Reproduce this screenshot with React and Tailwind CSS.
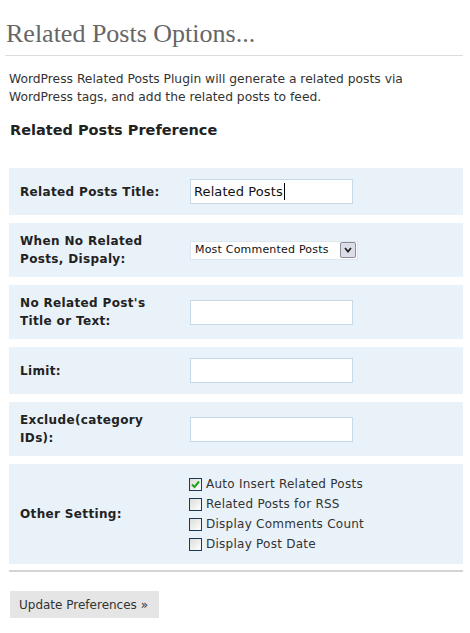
import React from 'react';

const rows = [
    { label: 'Related Posts Title:', value: 'Related Posts', h: 'h-[47px]' },
    { label: 'When No Related Posts, Dispaly:', select: true, h: 'h-[54px]' },
    { label: "No Related Post's Title or Text:", value: '', h: 'h-[54px]' },
    { label: 'Limit:', value: '', h: 'h-[47px]' },
    { label: 'Exclude(category IDs):', value: '', h: 'h-[54px]' },
];

const options = [
    { label: 'Auto Insert Related Posts', checked: true },
    { label: 'Related Posts for RSS' },
    { label: 'Display Comments Count' },
    { label: 'Display Post Date' },
];

function Checkbox({ checked }) {
    return (
        <span className="w-[13px] h-[13px] border border-[#1c3a57] bg-gradient-to-br from-[#dcdcd7] to-white flex items-center justify-center shrink-0">
            {checked && (
                <svg width="9" height="9" viewBox="0 0 9 9">
                    <path d="M1 4.5 L3.5 7 L8 1.5" stroke="#21a121" strokeWidth="2" fill="none" />
                </svg>
            )}
        </span>
    );
}

export default function App() {
    return (
        <div className="bg-white w-[470px] h-[633px] pl-[5px] pr-[7px] font-['DejaVu_Sans',sans-serif]">
            <h2 className="pt-[20px] pl-[1px] pb-[7px] text-[26px] leading-[28px] text-[#666] font-['Liberation_Serif',serif] font-normal border-b border-[#dcdcdc]">
                Related Posts Options...
            </h2>
            <p className="mt-[14px] ml-[4px] text-[12.3px] leading-[18px] text-[#333]">
                WordPress Related Posts Plugin will generate a related posts via
                WordPress tags, and add the related posts to feed.
            </p>
            <h3 className="mt-[15px] ml-[5px] text-[14.5px] leading-[18px] font-bold text-[#222]">
                Related Posts Preference
            </h3>

            <div className="mt-[29px] ml-[4px] flex flex-col gap-[8px]">
                {rows.map((r) => (
                    <div key={r.label} className={`${r.h} bg-[#e9f1f9] flex items-center`}>
                        <div className="w-[181px] pl-[11px] pr-[10px] text-[12px] leading-[18px] font-bold text-[#222] tracking-[0.35px]">
                            {r.label}
                        </div>
                        {r.select ? (
                            <div className="w-[168px] h-[19px] bg-white border border-[#dde6ee] flex items-center justify-between pl-[4px] pr-[1px]">
                                <span className="text-[11px] text-[#111] tracking-[0.2px]">Most Commented Posts</span>
                                <span className="w-[16px] h-[16px] border border-[#8a8a9a] rounded-[2px] bg-[#dcdde6] flex items-center justify-center">
                                    <svg width="8" height="6" viewBox="0 0 8 6">
                                        <path d="M1 1 L4 4.5 L7 1" stroke="#222" strokeWidth="1.8" fill="none" />
                                    </svg>
                                </span>
                            </div>
                        ) : (
                            <div className="w-[163px] h-[25px] bg-white border border-[#c6d9e9] flex items-center px-[3px] text-[13px] text-[#111] tracking-[0.1px]">
                                {r.value}
                                {r.value && <span className="w-px h-[17px] bg-black ml-[1px]" />}
                            </div>
                        )}
                    </div>
                ))}

                <div className="h-[100px] bg-[#e9f1f9] flex items-center">
                    <div className="w-[180px] pl-[11px] text-[12px] font-bold text-[#222] tracking-[0.35px]">
                        Other Setting:
                    </div>
                    <div className="flex flex-col gap-[3px]">
                        {options.map((o) => (
                            <label key={o.label} className="flex items-center gap-[4px] text-[12px] leading-[17px] text-[#333] tracking-[0.25px]">
                                <Checkbox checked={o.checked} />
                                {o.label}
                            </label>
                        ))}
                    </div>
                </div>
            </div>

            <div className="mt-[6px] ml-[4px] border-t-2 border-[#d4d4d4]" />

            <button className="mt-[19px] ml-[5px] w-[149px] h-[27px] bg-[#e5e5e5] text-[12px] text-[#333] text-left pl-[9px]">
                Update Preferences »
            </button>
        </div>
    );
}
